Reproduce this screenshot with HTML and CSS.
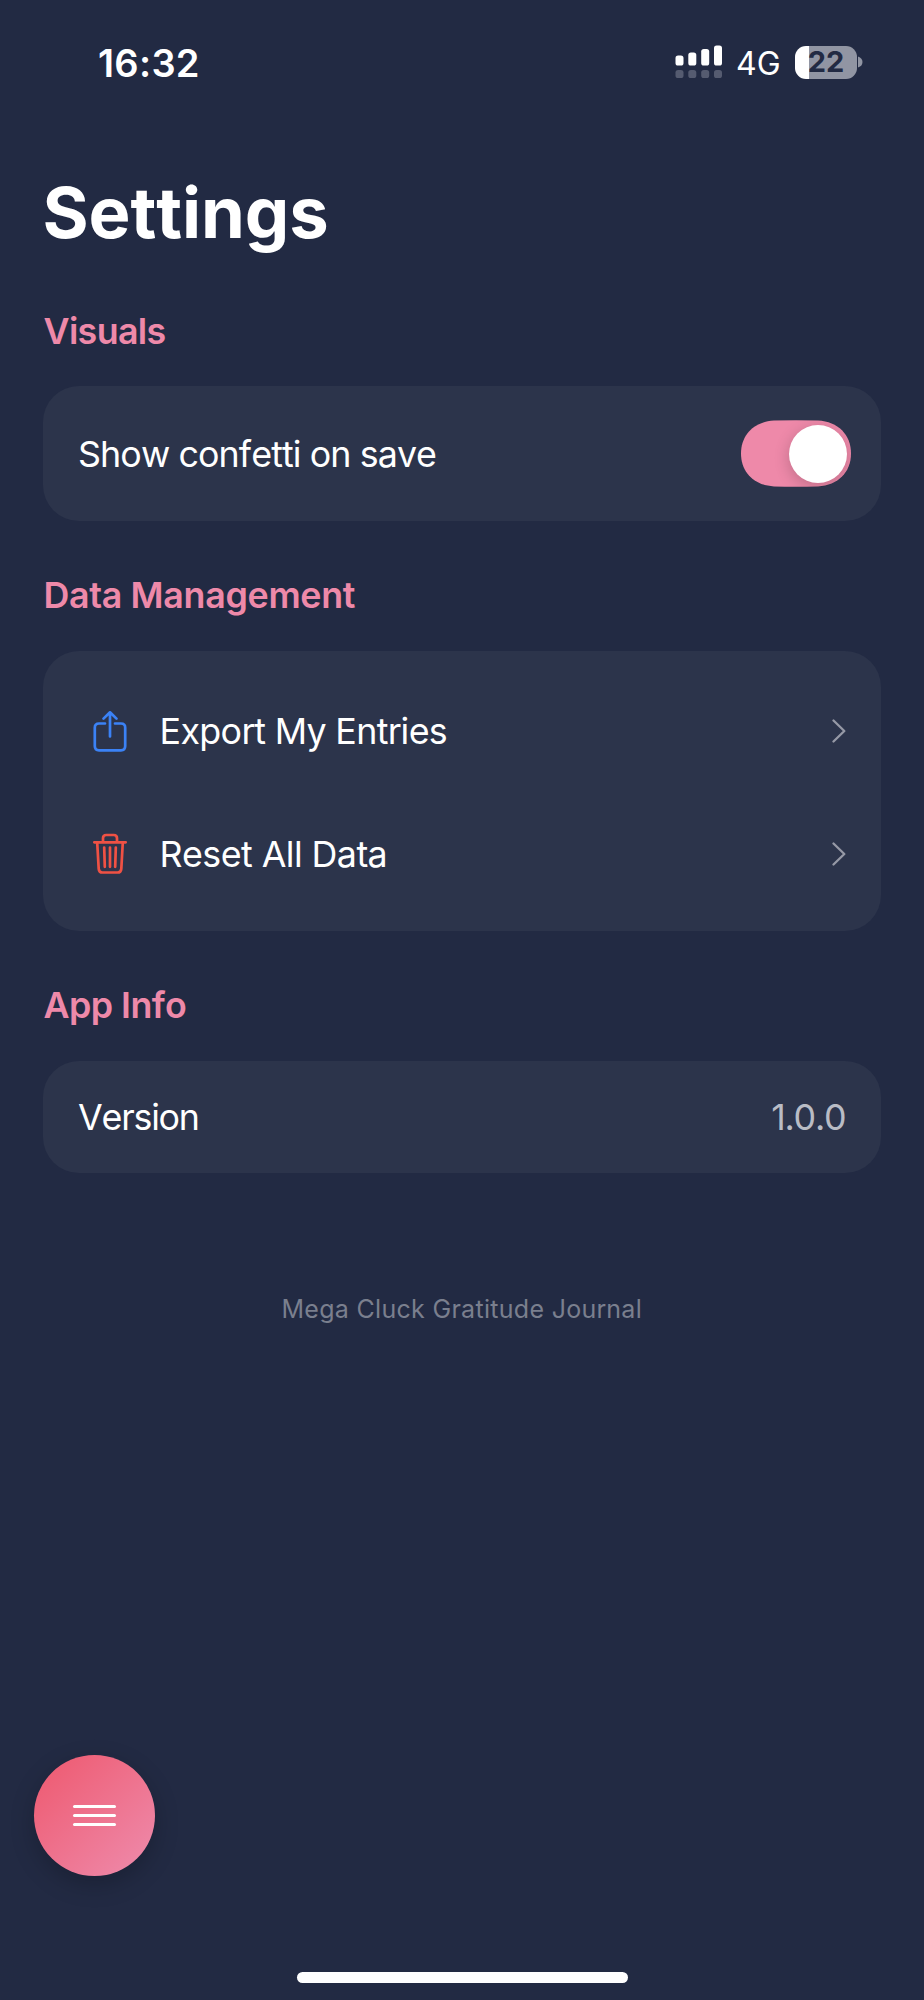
FILE: index.html
```html
<!DOCTYPE html>
<html lang="en">
<head>
<meta charset="utf-8">
<title>Settings</title>
<link rel="stylesheet" href="styles.css">
</head>
<body>
<div class="screen">
  <header class="status">
    <span class="time">16:32</span>
    <div class="indicators">
      <svg class="signal" width="48" height="34" viewBox="0 0 48 34">
        <g fill="#fff"><rect x="0.5" y="10.5" width="8" height="10" rx="2.6"/><rect x="13.3" y="7.5" width="8" height="13" rx="2.6"/><rect x="26.2" y="4" width="8" height="16.500" rx="2.6"/><rect x="39" y="0.500" width="8" height="20" rx="2.6"/></g>
        <g fill="#555b70"><rect x="0.5" y="25" width="8" height="8" rx="2.6"/><rect x="13.3" y="25" width="8" height="8" rx="2.6"/><rect x="26.2" y="25" width="8" height="8" rx="2.6"/><rect x="39" y="25" width="8" height="8" rx="2.6"/></g>
      </svg>
      <span class="network">4G</span>
      <div class="battery"><div class="cell"><span class="level">22</span></div>
        <svg width="5" height="12" viewBox="0 0 5 12"><path d="M0 0.500Q4.500 2 4.500 6T0 11.500Z" fill="#9195a3"/></svg>
      </div>
    </div>
  </header>
  <main class="content">
    <h1 class="title">Settings</h1>
    <section class="group">
      <h2 class="heading visuals">Visuals</h2>
      <div class="card toggle-card">
        <span class="label confetti">Show confetti on save</span>
        <div class="toggle">
          <svg class="track" width="110" height="67" viewBox="0 0 110 67"><path d="M33 0.600Q55-0.200 77 0.600C97 1.500 110 15 110 33.500S97 65.500 77 66.400Q55 67.200 33 66.400C13 65.500 0 52 0 33.500S13 1.500 33 0.600Z" fill="#ee89a9"/></svg>
          <div class="knob-clip"><div class="knob"></div></div>
        </div>
      </div>
    </section>
    <section class="group">
      <h2 class="heading data">Data Management</h2>
      <div class="card list-card">
        <div class="row">
          <svg class="icon" width="36" height="42" viewBox="0 0 36 42" fill="none" stroke="#3b82f6" stroke-width="2.700" stroke-linecap="round" stroke-linejoin="round"><path d="M13 13.500H7Q2.800 13.500 2.800 17.700V36.100Q2.800 40.300 7 40.300H29Q33.200 40.300 33.200 36.100V17.700Q33.200 13.500 29 13.500H23M18 26.500V2.300M11.500 8.600L18 2.300L24.500 8.600"/></svg>
          <span class="label export">Export My Entries</span>
          <svg class="chevron" width="14" height="24" viewBox="0 0 14 24"><path d="M1.500 1.500L12.300 12L1.500 22.500"/></svg>
        </div>
        <div class="row">
          <svg class="icon" width="36" height="42" viewBox="0 0 36 42" fill="none" stroke="#ef5144" stroke-width="2.700" stroke-linecap="round" stroke-linejoin="round"><path d="M2.300 9.300H33.700M5.200 9.500L6.700 35.800Q7 39.500 10.500 39.500H25.500Q29 39.500 29.300 35.800L30.800 9.500M11 9V5.200Q11 2 14.200 2H21.800Q25 2 25 5.200V9M12.200 14.500L12.800 33.800M18 14.500V33.800M23.800 14.500L23.200 33.800"/></svg>
          <span class="label reset">Reset All Data</span>
          <svg class="chevron" width="14" height="24" viewBox="0 0 14 24"><path d="M1.500 1.500L12.300 12L1.500 22.500"/></svg>
        </div>
      </div>
    </section>
    <section class="group">
      <h2 class="heading info">App Info</h2>
      <div class="card version-card">
        <span class="label version">Version</span>
        <span class="value">1.0.0</span>
      </div>
    </section>
    <p class="footer">Mega Cluck Gratitude Journal</p>
  </main>
  <div class="bottom">
    <button class="menu" aria-label="Menu"><span></span><span></span><span></span></button>
    <div class="home"></div>
  </div>
</div>
</body>
</html>
```
FILE: styles.css
```css
* { box-sizing: border-box; margin: 0; padding: 0; }
body { background: #222a43; font-family: Inter, "Liberation Sans", sans-serif; color: #fff; font-kerning: none; }
.screen { height: 2000px; display: flex; flex-direction: column; overflow: hidden; white-space: nowrap; }
.status { height: 124px; flex: none; display: flex; justify-content: space-between; padding: 0 61px 0 98px; }
.time { font-size: 38px; font-weight: 600; line-height: 126px; letter-spacing: .3px; }
.indicators { display: flex; align-items: center; height: 124px; }
.signal { margin-right: 13px; }
.network { font-size: 32px; line-height: 1; padding-top: 3px; width: 59px; }
.battery { display: flex; align-items: center; gap: 1px; }
.cell { width: 62px; height: 33px; border-radius: 11px; background: linear-gradient(90deg, #fff 14px, #9195a3 14px); }
.level { display: block; text-align: center; font-size: 29px; font-weight: 700; line-height: 32px; color: #222a43; }
.content { padding: 0 43.500px 0 43px; flex: 1; }
.title { font-size: 70.500px; font-weight: 700; line-height: 100px; margin: 39px 0 0 -.5px; letter-spacing: -.1px; }
.group { margin-top: 51px; }
.title + .group { margin-top: 44.500px; }
.heading { font-size: 35.800px; font-weight: 600; line-height: 46px; margin: 0 0 32.500px .5px; color: #ee89a9; }
.visuals { letter-spacing: -.65px; }
.data { letter-spacing: -.3px; }
.info { letter-spacing: -.55px; }
.card { background: #2c344b; border-radius: 36px; }
.toggle-card, .version-card { display: flex; align-items: center; justify-content: space-between; padding: 0 29.500px 0 35px; }
.toggle-card { height: 135px; }
.label, .value { font-size: 35.800px; line-height: 46px; letter-spacing: -.64px; }
.confetti { letter-spacing: -.9px; }
.reset { letter-spacing: -.55px; }
.version, .value { letter-spacing: -1.200px; }
.toggle { position: relative; width: 110px; height: 67px; }
.track { display: block; }
.knob-clip { position: absolute; inset: 0; border-radius: 34px; overflow: hidden; }
.knob { width: 58px; height: 58px; margin: 4.500px 0 0 47.500px; border-radius: 50%; background: #fff; box-shadow: 0 4px 16px rgba(0, 0, 0, .2); }
.list-card { height: 280px; padding: 19px 35px 15px 48.500px; }
.row { height: 123px; display: flex; align-items: center; }
.icon { flex: none; margin-right: 32px; }
.chevron { margin-left: auto; fill: none; stroke: #9699a6; stroke-width: 2.300; stroke-linecap: round; stroke-linejoin: round; }
.info + .card { margin-top: 33px; }
.version-card { height: 112px; padding-right: 35px; }
.value { color: #b9bcc5; }
.footer { text-align: center; margin-top: 116px; font-size: 25px; line-height: 40px; color: #7a7f8e; letter-spacing: .3px; }
.bottom { height: 245px; flex: none; display: flex; flex-direction: column; align-items: center; justify-content: space-between; padding-bottom: 17px; }
.menu { align-self: flex-start; margin-left: 34px; width: 121px; height: 121px; border: 0; border-radius: 50%; background: linear-gradient(135deg, #ee5d74 10%, #ee87a7 90%); box-shadow: 0 8px 24px rgba(0, 0, 0, .22); display: flex; flex-direction: column; align-items: center; justify-content: center; gap: 6px; }
.menu span { width: 43px; height: 3px; border-radius: 2px; background: #fff; }
.home { width: 331px; height: 11px; border-radius: 6px; background: #fff; }
```
